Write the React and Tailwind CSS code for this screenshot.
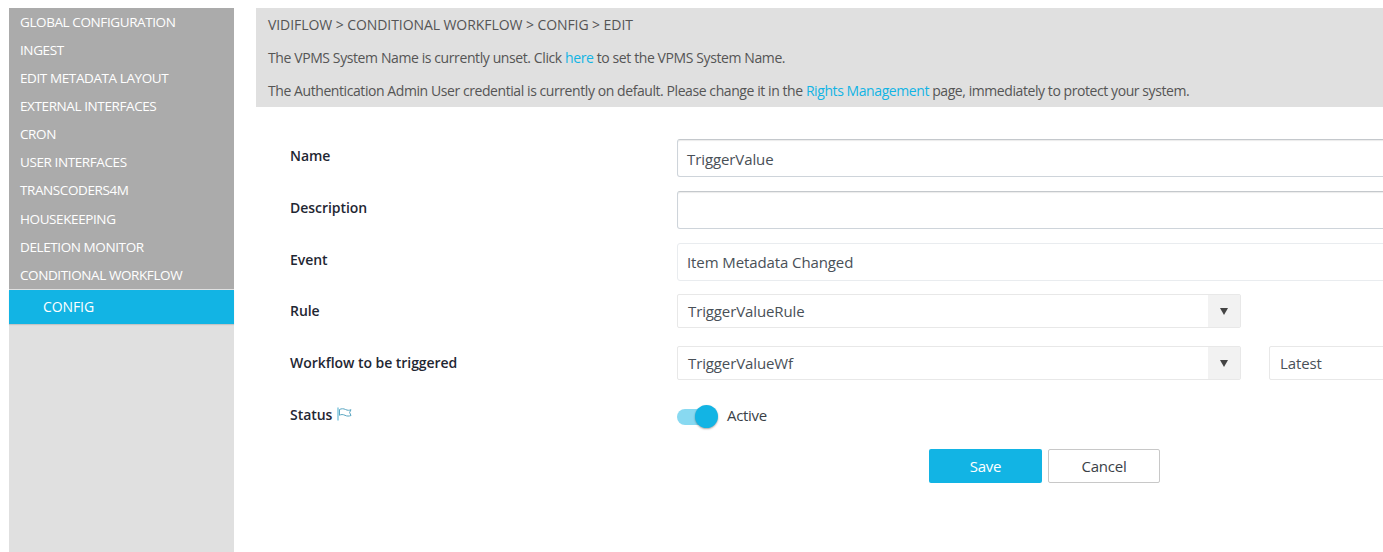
import React from 'react'

const FONT = "font-['Open_Sans','Noto_Sans',sans-serif]"

const MENU = [
  'GLOBAL CONFIGURATION',
  'INGEST',
  'EDIT METADATA LAYOUT',
  'EXTERNAL INTERFACES',
  'CRON',
  'USER INTERFACES',
  'TRANSCODERS4M',
  'HOUSEKEEPING',
  'DELETION MONITOR',
  'CONDITIONAL WORKFLOW',
]

function Label({ children }) {
  return <div className="w-[387px] shrink-0 text-[14px] font-semibold text-[#1f2733] tracking-[-0.05px]">{children}</div>
}

function TextBox({ value, muted }) {
  return (
    <div
      className={
        'flex-1 h-[38px] rounded-[3px] border flex items-center pl-[9px] text-[15px] tracking-[-0.1px] text-[#495057] ' +
        (muted ? 'pt-[1px] border-[#e9ecef]' : 'pt-[3px] border-[#ced4da] border-t-[#c4c8cc] shadow-[inset_0_1px_1px_rgba(0,0,0,0.08)]')
      }
    >
      {value}
    </div>
  )
}

function Select({ value }) {
  return (
    <div className="w-[564px] h-[34px] shrink-0 rounded-[2px] border border-[#e8e8e8] flex items-stretch text-[15px] tracking-[-0.12px] text-[#495057]">
      <div className="flex-1 flex items-center pl-[10px] pt-[1px]">{value}</div>
      <div className="w-[32px] bg-[#f2f2f2] flex items-center justify-center">
        <span className="w-0 h-0 border-x-[4.5px] border-x-transparent border-t-[7px] border-t-[#444]" />
      </div>
    </div>
  )
}

export default function App() {
  return (
    <div className={`${FONT} w-[1383px] h-[552px] overflow-hidden bg-white flex pl-[9px] pt-[8px]`}>
      {/* Sidebar */}
      <aside className="w-[225px] shrink-0 bg-[#e0e0e0] flex flex-col">
        <div className="bg-[#ababab] h-[281px] flex flex-col">
          {MENU.map(item => (
            <div key={item} className="h-[28.15px] flex items-center pl-[11px] text-[13.5px] tracking-[-0.4px] text-white whitespace-nowrap">
              {item}
            </div>
          ))}
        </div>
        <div className="mt-[1px] h-[34px] bg-[#12b4e4] flex items-center pl-[34px] pb-[2px] text-[14px] tracking-[-0.1px] text-white shadow-[0_1px_1px_rgba(0,0,0,0.12)]">
          CONFIG
        </div>
      </aside>

      {/* Main */}
      <main className="flex-1 ml-[22px] min-w-0">
        <div className="h-[99px] bg-[#e0e0e0] pl-[12px] pt-[7px] text-[14px] text-[#555] whitespace-nowrap flex flex-col gap-[13px]">
          <div className="h-[20px] leading-[20px] tracking-[-0.07px]">VIDIFLOW &gt; CONDITIONAL WORKFLOW &gt; CONFIG &gt; EDIT</div>
          <div className="h-[20px] leading-[20px] tracking-[-0.4px]">
            The VPMS System Name is currently unset. Click <span className="text-[#12b4e4]">here</span> to set the VPMS System Name.
          </div>
          <div className="h-[20px] leading-[20px] tracking-[-0.425px]">
            The Authentication Admin User credential is currently on default. Please change it in the <span className="text-[#12b4e4]">Rights Management</span> page, immediately to protect your system.
          </div>
        </div>

        <form className="w-[1180px] pl-[34px] pt-[32px] flex flex-col">
          <div className="flex items-start h-[52px]">
            <div className="pt-[6px]"><Label>Name</Label></div>
            <TextBox value="TriggerValue" />
          </div>
          <div className="flex items-start h-[52px]">
            <div className="pt-[6px]"><Label>Description</Label></div>
            <TextBox value="" />
          </div>
          <div className="flex items-start h-[51px]">
            <div className="pt-[6px]"><Label>Event</Label></div>
            <TextBox value="Item Metadata Changed" muted />
          </div>
          <div className="flex items-start h-[52px]">
            <div className="pt-[6px]"><Label>Rule</Label></div>
            <Select value="TriggerValueRule" />
          </div>
          <div className="flex items-start h-[52px]">
            <div className="pt-[6px]"><Label>Workflow to be triggered</Label></div>
            <Select value="TriggerValueWf" />
            <div className="ml-[28px] flex-1 h-[34px] rounded-[2px] border border-[#e8e8e8] flex items-center pl-[10px] pt-[1px] text-[15px] tracking-[-0.12px] text-[#495057]">
              Latest
            </div>
          </div>
          <div className="flex items-start h-[34px]">
            <div className="w-[387px] shrink-0 pt-[6px] flex items-center gap-[5px] text-[14px] font-semibold text-[#1f2733] tracking-[-0.05px]">
              Status
              <svg width="16" height="14" viewBox="0 0 16 14" fill="none" className="mt-[-1px]">
                <path d="M1 0.5V13.5" stroke="#7cc4dc" strokeWidth="1.4" />
                <path d="M2.500 2.500c2-1 4-1 6 0s4 1 5.500 .2L12.600 5.500 14 8.500c-2 .8-4 .8-6-.2s-4-1-5.500 0z" stroke="#5aa6c2" strokeWidth="1" />
              </svg>
            </div>
            <div className="relative w-[42px] h-[24px] shrink-0 mt-[7px]">
              <div className="absolute left-0 top-[4px] w-[40px] h-[16px] rounded-full bg-[#88d9f1]" />
              <div className="absolute left-[18px] top-0 w-[23px] h-[23px] rounded-full bg-[#12b4e4] shadow-[0_1px_2px_rgba(0,0,0,0.35)]" />
            </div>
            <span className="ml-[8px] mt-[6px] text-[15px] tracking-[-0.3px] text-[#3a3f47]">Active</span>
          </div>
          <div className="flex gap-[6px] pl-[639px] mt-[17px]">
            <button type="button" className="w-[113px] h-[34px] rounded-[2px] bg-[#12b4e4] text-white text-[15px] tracking-[-0.25px]">
              Save
            </button>
            <button type="button" className="w-[112px] h-[34px] rounded-[2px] bg-white border border-[#c8c8c8] text-[#3a3f47] text-[15px] tracking-[-0.25px]">
              Cancel
            </button>
          </div>
        </form>
      </main>
    </div>
  )
}
